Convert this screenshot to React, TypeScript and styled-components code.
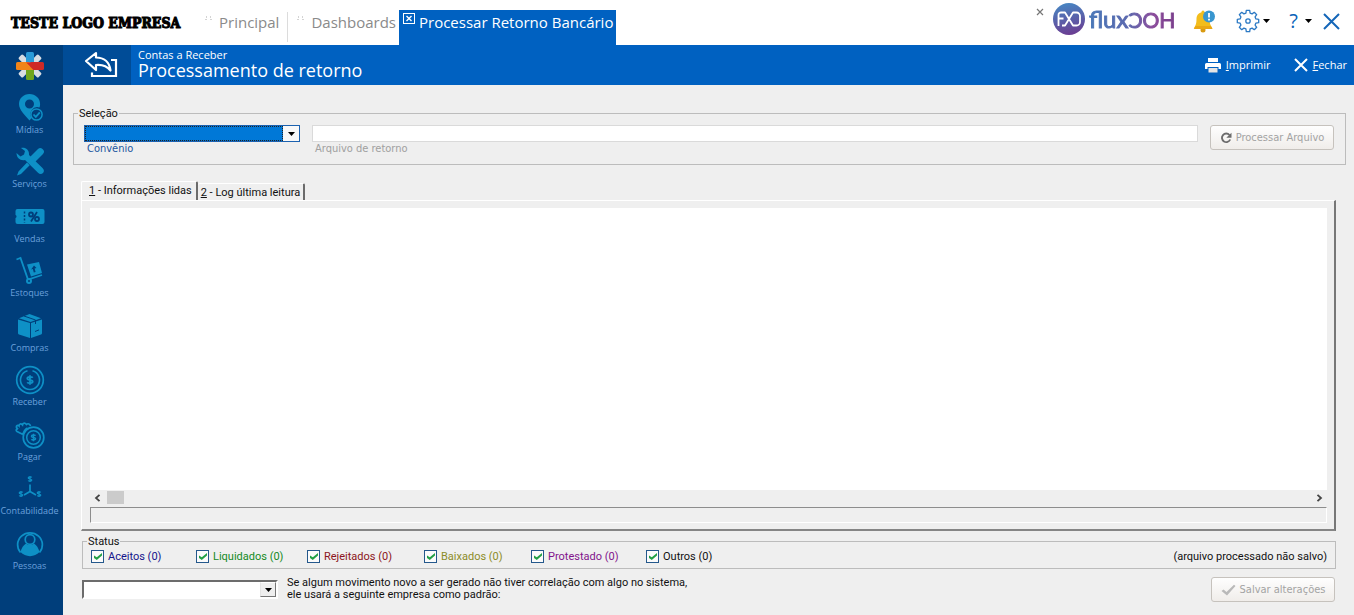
import React from "react";
import styled, { createGlobalStyle, css } from "styled-components";

const GlobalStyle = createGlobalStyle`
  *, *::before, *::after { box-sizing: border-box; }
  body { margin: 0; background: #efefef; }
  button, input, select { font: inherit; margin: 0; }
`;

const uiFont = css`font-family: Roboto, sans-serif;`;
const labelFont = css`font-family: "DejaVu Sans Condensed", "DejaVu Sans", sans-serif;`;
const headFont = css`font-family: "Open Sans", "Noto Sans", sans-serif;`;

const Page = styled.div`
  ${uiFont}
  font-size: 11px;
  line-height: 12px;
  color: #111;
  display: flex;
  flex-direction: column;
  min-height: 100vh;
`;

/* ---------- top bar ---------- */

const TopBar = styled.header`
  ${headFont}
  display: flex;
  align-items: stretch;
  height: 45px;
  background: #fff;
`;

const CompanyLogo = styled.div`
  width: 199px;
  padding: 13px 0 0 11px;
  font-family: "DejaVu Serif Condensed", "DejaVu Serif", serif;
  font-size: 14px;
  line-height: 20px;
  font-weight: 900;
  color: #000;
  -webkit-text-stroke: 1px #000;
  white-space: nowrap;
`;

const TabStrip = styled.nav`
  display: flex;
  align-items: flex-end;
`;

const PageTab = styled.a<{ $active?: boolean }>`
  display: flex;
  align-items: flex-start;
  height: 35px;
  padding: 2px 3px 0 4px;
  gap: 4px;
  font-size: 15px;
  line-height: 20px;
  white-space: nowrap;
  text-decoration: none;
  color: ${(p) => (p.$active ? "#fff" : "#8a8a8a")};
  background: ${(p) => (p.$active ? "#0061c1" : "transparent")};
`;

const TabDivider = styled.span`
  width: 1px;
  height: 30px;
  align-self: flex-end;
  margin: 0 3px 3px 5px;
  background: #dcdcdc;
`;

const TabGrip = styled.svg`
  margin: 4px 2px 0;
`;

const TopActions = styled.div`
  display: flex;
  align-items: flex-start;
  margin-left: auto;
  padding-right: 14px;
`;

const IconButton = styled.button<{ $top: number; $left: number }>`
  display: flex;
  align-items: center;
  gap: 3px;
  border: 0;
  padding: 0;
  background: none;
  color: #0a62b8;
  margin-top: ${(p) => p.$top}px;
  margin-left: ${(p) => p.$left}px;
`;

const Brand = styled.div`
  display: flex;
  align-items: flex-start;
  margin: 3px 0 0 9px;
  gap: 4px;
`;

const BrandName = styled.span`
  font-family: Lato, sans-serif;
  font-size: 24px;
  line-height: 32px;
  height: 34px;
  white-space: nowrap;
  color: transparent;
  background: linear-gradient(90deg, #4a78b8 0%, #5a68ae 45%, #8a4a9a 75%, #7a3f8c 100%);
  background-clip: text;
  -webkit-text-stroke: 1px transparent;
`;

const BrandCaps = styled.span`
  font-size: 21px;
`;

const HelpMark = styled.span`
  font-size: 20px;
  line-height: 24px;
  margin-right: 4px;
`;

/* ---------- blue title bar and side bar ---------- */

const Body = styled.div`
  flex: 1;
  display: flex;
`;

const SideBar = styled.nav`
  ${headFont}
  width: 63px;
  flex: none;
  display: flex;
  flex-direction: column;
  padding-bottom: 40px;
  background: #003e7b;
`;

const SideLogo = styled.div`
  height: 40px;
  display: flex;
  justify-content: center;
  padding: 6px 4px 0 0;
`;

const SideItem = styled.a`
  flex: 1;
  min-height: 50px;
  display: flex;
  flex-direction: column;
  align-items: center;
  gap: 1px;
  padding: 8px 4px 0 0;
  color: #6ba0dc;
  font-size: 9px;
  line-height: 12px;
  text-decoration: none;
  svg { color: #0e90c6; flex: none; }
`;

const Main = styled.main`
  flex: 1;
  min-width: 0;
  display: flex;
  flex-direction: column;
`;

const TitleBar = styled.div`
  ${headFont}
  display: flex;
  height: 40px;
  background: #0061c1;
  color: #fff;
`;

const BackButton = styled.button`
  width: 68px;
  border: 0;
  padding: 0 0 0 8px;
  background: #004c97;
  display: flex;
  align-items: center;
  justify-content: center;
`;

const Titles = styled.div`
  padding: 3px 0 0 7px;
`;

const Section = styled.div`
  font-size: 11px;
  line-height: 13px;
`;

const Title = styled.h1`
  margin: 0;
  font-size: 18px;
  line-height: 18px;
  font-weight: 400;
`;

const TitleActions = styled.div`
  display: flex;
  gap: 23px;
  margin-left: auto;
  padding-right: 7px;
`;

const TitleAction = styled.button`
  ${headFont}
  display: flex;
  align-items: center;
  gap: 5px;
  border: 0;
  padding: 0;
  background: none;
  color: #fff;
  font-size: 11px;
`;

/* ---------- form ---------- */

const Content = styled.div`
  flex: 1;
  display: flex;
  flex-direction: column;
  padding: 22px 18px 13px;
`;

const Group = styled.fieldset`
  margin: 0;
  padding: 0;
  border: 1px solid #bcbcbc;
  min-width: 0;
`;

const SelectionGroup = styled(Group)`
  margin: 0 -10px 0 -8px;
  padding: 5px 11px 8px 10px;
`;

const StatusGroup = styled(Group)`
  margin: 4px 0 0 1px;
  padding: 2px 8px 5px;
`;

const Legend = styled.legend`
  margin-left: -6px;
  padding: 0 1px;
  line-height: 13px;
`;

const StatusLegend = styled(Legend)`
  margin-left: -4px;
`;

const FormRow = styled.div`
  ${labelFont}
  display: flex;
  align-items: flex-start;
`;

const Field = styled.div<{ $grow?: boolean }>`
  display: flex;
  flex-direction: column;
  flex: ${(p) => (p.$grow ? "1" : "0 0 216px")};
  margin-right: 12px;
`;

const FieldLabel = styled.label<{ $muted?: boolean }>`
  padding-left: 3px;
  line-height: 14px;
  color: ${(p) => (p.$muted ? "#a0a0a0" : "#1d57a0")};
`;

const Combo = styled.div<{ $active?: boolean }>`
  display: flex;
  height: ${(p) => (p.$active ? 17 : 19)}px;
  width: ${(p) => (p.$active ? "100%" : "196px")};
  flex: none;
  background: #fff;
  ${(p) =>
    p.$active
      ? css`border: 1px solid #1c62b0;`
      : css`
          border: 2px solid;
          border-color: #6c6c6c #fff #fff #6c6c6c;
        `}
`;

const Select = styled.select<{ $active?: boolean }>`
  appearance: none;
  flex: 1;
  min-width: 0;
  padding: 0;
  border-radius: 0;
  outline: none;
  border: ${(p) => (p.$active ? "1px dotted #222" : "0")};
  background: ${(p) => (p.$active ? "#0078d7" : "#fff")};
`;

const ComboArrow = styled.span<{ $raised?: boolean }>`
  width: 16px;
  display: flex;
  align-items: center;
  justify-content: center;
  pointer-events: none;
  background: ${(p) => (p.$raised ? "#efefef" : "#f8f8f8")};
  ${(p) =>
    p.$raised &&
    css`
      border: 1px solid;
      border-color: #fff #777 #777 #e4e4e4;
    `}
`;

const TextInput = styled.input`
  height: 17px;
  width: 100%;
  padding: 0 3px;
  border: 1px solid #dadada;
  background: #fff;
`;

const PushButton = styled.button`
  ${labelFont}
  display: flex;
  align-items: center;
  justify-content: center;
  gap: 4px;
  flex: none;
  width: 124px;
  height: 25px;
  padding: 0;
  border: 1px solid #c6c2bd;
  border-radius: 3px;
  background: linear-gradient(#fefefe, #f0edea);
  color: #a3a3a3;
  white-space: nowrap;
`;

/* ---------- tabbed panel ---------- */

const Tabs = styled.div`
  display: flex;
  align-items: flex-end;
  margin: 16px 0 0;
`;

const Tab = styled.button<{ $active?: boolean }>`
  height: ${(p) => (p.$active ? 19 : 17)}px;
  padding: ${(p) => (p.$active ? "0 4px 0 7px" : "2px 3px 0")};
  border: 0;
  border-top: 1px solid #fff;
  border-left: ${(p) => (p.$active ? "1px solid #fff" : "0")};
  border-right: 2px solid #6b6b6b;
  border-radius: 2px 2px 0 0;
  background: #efefef;
  color: #111;
  white-space: nowrap;
`;

const Panel = styled.section`
  flex: 1;
  display: flex;
  flex-direction: column;
  padding: 7px 7px 6px 8px;
  border: 1px solid #fff;
  border-right: 2px solid #777;
  border-bottom: 2px solid #858585;
`;

const Output = styled.div`
  flex: 1;
  min-height: 120px;
  background: #fff;
`;

const ScrollBar = styled.div`
  display: flex;
  align-items: center;
  height: 15px;
  padding: 0 4px;
  color: #444;
`;

const Thumb = styled.span`
  width: 17px;
  height: 13px;
  margin-left: 6px;
  margin-right: auto;
  background: #cbcbcb;
`;

const ProgressLine = styled.div`
  height: 16px;
  margin-top: 2px;
  border: 1px solid;
  border-color: #8d8d8d #fff #fff #8d8d8d;
`;

/* ---------- status and footer ---------- */

const StatusRow = styled.div`
  display: grid;
  grid-template-columns: 105px 111px 117px 107px 115px auto 1fr;
  align-items: center;
`;

const CheckLabel = styled.label<{ $color: string }>`
  display: flex;
  align-items: center;
  gap: 4px;
  white-space: nowrap;
  color: ${(p) => p.$color};
`;

const Check = styled.input`
  appearance: none;
  width: 13px;
  height: 13px;
  border: 1px solid #24588c;
  background: #fbfbfb;
  &:checked::before {
    content: "";
    display: block;
    width: 8px;
    height: 7px;
    margin: 2px;
    background: #21a045;
    clip-path: polygon(0 35%, 35% 62%, 100% 0, 100% 35%, 35% 100%, 0 70%);
  }
`;

const StatusNote = styled.span`
  text-align: right;
  white-space: nowrap;
`;

const Footer = styled.footer`
  display: flex;
  align-items: flex-start;
  margin: 8px 1px 0 1px;
`;

const FooterCombo = styled.div`
  padding-top: 3px;
`;

const FooterText = styled.label`
  margin-left: 9px;
  margin-right: auto;
`;

/* ---------- icons ---------- */

const Caret = ({ w = 7 }: { w?: number }) => (
  <svg width={w} height="4" viewBox="0 0 7 4" aria-hidden="true">
    <path d="M0 0h7L3.500 4z" fill="#000" />
  </svg>
);

const Grip = () => (
  <TabGrip width="8" height="8" viewBox="0 0 8 8" aria-hidden="true">
    <g fill="#d4d4d4">
      <rect x="1" y="0" width="1" height="2" />
      <rect x="5" y="0" width="1" height="2" />
      <rect x="0" y="3" width="2" height="1" />
      <rect x="5" y="3" width="2" height="1" />
    </g>
  </TabGrip>
);

const SideSvg = ({ children }: { children: React.ReactNode }) => (
  <svg width="30" height="30" viewBox="0 0 30 30" fill="currentColor" aria-hidden="true">
    {children}
  </svg>
);

const Dollar = ({ x, y, s }: { x: number; y: number; s: number }) => (
  <g transform={`translate(${x} ${y}) scale(${s})`}>
    <path
      d="M3 -2.600C2 -4 -3 -4 -3 -1.700C-3 .500 3 -.500 3 1.800C3 4 -2 4 -3 2.500M0 -5.200V5.200"
      fill="none"
      stroke="currentColor"
      strokeWidth="2"
    />
  </g>
);

const sideItems: { label: string; icon: React.ReactNode }[] = [
  {
    label: "Mídias",
    icon: (
      <>
        <path
          fillRule="evenodd"
          d="M14.500 1C8.500 1 4 5.400 4 11c0 6 6 11 10.500 16.500l2-2.500a7 7 0 0 1 8-10.500c.4-1 .6-2 .6-3.500C25.100 5.400 20.500 1 14.500 1zM14.500 6.500a4.500 4.500 0 1 1 0 9 4.500 4.500 0 0 1 0-9z"
        />
        <circle cx="21.500" cy="21.500" r="5.600" fill="none" stroke="currentColor" strokeWidth="1.500" />
        <path d="M18.500 21.500l2.300 2.400 4-4.500" fill="none" stroke="currentColor" strokeWidth="1.800" />
      </>
    ),
  },
  {
    label: "Serviços",
    icon: (
      <>
        <path d="M1.500 6l4 3.500 3.500-2L10 4 6 1C10.500-.2 14.500 3 14 8l13.500 13c1.800 1.700 1.800 3.500.5 5-1.500 1.500-3.500 1.300-5-.3L10 13C5.500 14 1.500 11 1.500 6z" />
        <path
          d="M27.500 2c2 1.700 2 3.500.5 5L20 15l-5-5 8-8c1.500-1.500 3-1.500 4.500 0zM12 15.500l2.700 2.700L6 27 2 28.500 3.500 24.500z"
        />
      </>
    ),
  },
  {
    label: "Vendas",
    icon: (
      <>
        <path d="M2.500 7h25a2 2 0 0 1 2 2v11a2 2 0 0 1-2 2h-25a2 2 0 0 1-2-2v-4a1.600 1.600 0 0 0 0-3V9a2 2 0 0 1 2-2z" />
        <path d="M9.500 9.500v11" stroke="#003e7b" strokeWidth="1.500" strokeDasharray="2 1.500" />
        <g fill="none" stroke="#003e7b" strokeWidth="1.800">
          <circle cx="16" cy="12.500" r="2" />
          <circle cx="22" cy="17" r="2" />
          <path d="M22 10l-6 9.500" />
        </g>
      </>
    ),
  },
  {
    label: "Estoques",
    icon: (
      <>
        <path d="M1.500 3.500l4-1.500L13 23.500l14-4.500" fill="none" stroke="currentColor" strokeWidth="1.800" />
        <path fillRule="evenodd" d="M12 8.500l12-2.500 3 11-11 3.500zM19 9.500l-2.900 4 1.700-.5 1 3.500 1.800-.5-1-3.500 1.900-.5z" />
        <circle cx="14" cy="25" r="3" />
        <circle cx="14" cy="25" r="1" fill="#003e7b" />
      </>
    ),
  },
  {
    label: "Compras",
    icon: (
      <>
        <path d="M3 8.500l12 3.500v15L4 23.500a1.500 1.500 0 0 1-1-1.500z" />
        <path d="M16 12L27 8.500V22a1.500 1.500 0 0 1-1 1.500l-10 3.500z" />
        <path d="M4 7.300l10.500-4.300L26 7.300l-10.500 3.700z" />
        <path d="M9 5l11.500 4v4" fill="none" stroke="#003e7b" strokeWidth="1" />
        <path d="M20 20.500l4-1.600" stroke="#003e7b" strokeWidth="1" />
      </>
    ),
  },
  {
    label: "Receber",
    icon: (
      <>
        <circle cx="15" cy="15" r="13.300" fill="none" stroke="currentColor" strokeWidth="1.700" />
        <path d="M12.500 5.800A9.500 9.500 0 1 0 17.500 5.800" fill="none" stroke="currentColor" strokeWidth="1.600" />
        <Dollar x={15} y={15} s={0.9} />
      </>
    ),
  },
  {
    label: "Pagar",
    icon: (
      <>
        <path
          d="M8 14.500L2 11.500C.5 10.500 1.500 8.500 3 9L1.500 7.500C1 5.500 3 5 4 6 4 3.500 6 3.500 7.500 5 8 2.500 10 2.500 11.500 4.500 13 3 15 4 15.500 6M8 14.500c.5-3 2-5 4.500-6.500"
          fill="none"
          stroke="currentColor"
          strokeWidth="1.700"
        />
        <circle cx="18.500" cy="17.500" r="10.300" fill="none" stroke="currentColor" strokeWidth="1.700" />
        <circle cx="18.500" cy="17.500" r="6.800" fill="none" stroke="currentColor" strokeWidth="1.500" />
        <Dollar x={18.5} y={17.5} s={0.7} />
      </>
    ),
  },
  {
    label: "Contabilidade",
    icon: (
      <>
        <path d="M15 10.500v7l-6 3.500M15 17.500l6 3.500" fill="none" stroke="currentColor" strokeWidth="1.700" />
        <Dollar x={15} y={5} s={0.6} />
        <Dollar x={6} y={20} s={0.6} />
        <Dollar x={24} y={20} s={0.6} />
      </>
    ),
  },
  {
    label: "Pessoas",
    icon: (
      <>
        <path d="M5.500 23.500A12.400 12 0 1 1 24.500 23.500" fill="none" stroke="currentColor" strokeWidth="1.700" />
        <path d="M5.500 23c1-4 3-7 5.500-8.500a6 6 0 0 0 8 0c2.500 1.500 4.500 4.500 5.500 8.500a13 13 0 0 1-19 0z" />
        <circle cx="15" cy="10.500" r="4.800" fill="none" stroke="currentColor" strokeWidth="1.700" />
      </>
    ),
  },
];

const AppMark = () => {
  const arms = ["#2a9bd8", "#d8dde2", "#cf2a27", "#d8dde2", "#6fa51c", "#d8dde2", "#f08418", "#d8dde2"];
  const order = [1, 3, 5, 7, 0, 4, 6, 2];
  return (
    <svg width="30" height="30" viewBox="-15 -15 30 30" aria-hidden="true">
      {order.map((i) => (
        <rect
          key={i}
          x={i % 2 ? -3 : -4}
          y="-14"
          width={i % 2 ? 6 : 8}
          height={i % 2 ? 11 : 14}
          rx="1.500"
          fill={arms[i]}
          transform={`rotate(${i * 45})`}
        />
      ))}
      <path d="M-4 -3.500L3.500 4V-3.500z" fill="#cf2a27" />
      <path d="M-4 -3.500L3.500 4H-4z" fill="#f08418" />
    </svg>
  );
};

const BackIcon = () => (
  <svg width="34" height="28" viewBox="0 0 34 28" fill="none" stroke="#fff" strokeWidth="2.200" aria-hidden="true">
    <path d="M12 2L2 10l10 9v-5c6-.5 11 1 14.500 5.500C25.500 11 20 6.500 12 6.500z" strokeLinejoin="round" />
    <path d="M27 9h5v16H8v-3.500" />
  </svg>
);

const BrandMark = () => (
  <svg width="32" height="32" viewBox="0 0 32 32" aria-hidden="true">
    <defs>
      <linearGradient id="brand" x1="0.200" y1="0" x2="0.400" y2="1">
        <stop offset="0" stopColor="#4688c4" />
        <stop offset="1" stopColor="#6a3f93" />
      </linearGradient>
    </defs>
    <circle cx="16" cy="16" r="16" fill="url(#brand)" />
    <g fill="none" stroke="#fff" strokeWidth="1.800" strokeLinejoin="round">
      <path d="M5.500 23V12a2.500 2.500 0 0 1 2.500-2.500h4L20 22.500h3.500a3.500 3.500 0 0 0 3.500-3.500v-6a3.500 3.500 0 0 0-3.500-3.500H20L12 22.500H9M5.500 15.500h5" />
    </g>
  </svg>
);

const BellIcon = () => (
  <svg width="24" height="24" viewBox="0 0 24 24" aria-hidden="true">
    <circle cx="10" cy="21" r="2.500" fill="#d99a10" />
    <path d="M10 1.500a1.500 1.500 0 0 1 1.500 1.700C15 4 16.500 7 16.500 10c0 4 .7 6 3 9.500H.8C3 16 3.500 14 3.500 10c0-3 1.500-6 5-6.800A1.500 1.500 0 0 1 10 1.500z" fill="#f3bd1c" />
    <path d="M2.500 17h15.300l1.700 3H.8z" fill="#eaa714" />
    <circle cx="16" cy="7.500" r="6" fill="#3996cf" />
    <path d="M16 4v4.500M16 9.800v1.700" stroke="#fff" strokeWidth="1.800" />
  </svg>
);

const gearPath = (() => {
  const pts: string[] = [];
  for (let i = 0; i < 8; i++) {
    [[-15, 8.2], [-9, 10.8], [9, 10.8], [15, 8.2]].forEach(([da, r]) => {
      const a = ((i * 45 + da) * Math.PI) / 180;
      pts.push(`${(12 + r * Math.cos(a)).toFixed(1)} ${(12 + r * Math.sin(a)).toFixed(1)}`);
    });
  }
  return `M${pts.join("L")}z`;
})();

const GearIcon = () => (
  <svg width="24" height="24" viewBox="0 0 24 24" fill="none" stroke="#2b79c4" strokeWidth="1.300" strokeLinejoin="round" aria-hidden="true">
    <path d={gearPath} />
    <circle cx="12" cy="12" r="2.200" />
  </svg>
);

const Cross = ({ size, color, weight }: { size: number; color: string; weight: number }) => (
  <svg width={size} height={size} viewBox={`0 0 ${size} ${size}`} aria-hidden="true">
    <path d={`M1 1L${size - 1} ${size - 1}M${size - 1} 1L1 ${size - 1}`} stroke={color} strokeWidth={weight} />
  </svg>
);

const PrinterIcon = () => (
  <svg width="16" height="15" viewBox="0 0 16 15" aria-hidden="true">
    <path d="M3 0h10v4H3z" fill="#fff" />
    <path d="M1.500 5h13A1.500 1.500 0 0 1 16 6.500V11h-2.500V9h-11v2H0V6.500A1.500 1.500 0 0 1 1.500 5z" fill="#fff" />
    <path d="M3.500 10h9v4.500h-9z" fill="#e4e4e4" />
  </svg>
);

const RefreshIcon = () => (
  <svg width="12" height="12" viewBox="0 0 12 12" aria-hidden="true">
    <path d="M9.500 3A4.300 4.300 0 1 0 10.200 7.500" fill="none" stroke="#6c6c6c" strokeWidth="1.900" />
    <path d="M11.500 .8v5H6.300z" fill="#6c6c6c" />
  </svg>
);

const SaveCheck = () => (
  <svg width="15" height="12" viewBox="0 0 15 12" aria-hidden="true">
    <path d="M.5 7l2-1.500L5.500 8 13 .8 14.500 2 6 11.500z" fill="#b9b9b9" />
  </svg>
);

const Chevron = ({ right }: { right?: boolean }) => (
  <svg width="7" height="8" viewBox="0 0 7 8" fill="none" stroke="#444" strokeWidth="1.800" aria-hidden="true">
    <path d={right ? "M1.500 .8L5 4 1.500 7.200" : "M5.500 .8L2 4l3.500 3.200"} />
  </svg>
);

const statuses = [
  { label: "Aceitos (0)", color: "#14148c" },
  { label: "Liquidados (0)", color: "#148a1e" },
  { label: "Rejeitados (0)", color: "#8c1420" },
  { label: "Baixados (0)", color: "#8c8c28" },
  { label: "Protestado (0)", color: "#82148c" },
  { label: "Outros (0)", color: "#111" },
];

export default function App() {
  return (
    <Page>
      <GlobalStyle />
      <TopBar>
        <CompanyLogo>TESTE LOGO EMPRESA</CompanyLogo>
        <TabStrip>
          <PageTab href="#principal"><Grip />Principal</PageTab>
          <TabDivider />
          <PageTab href="#dashboards"><Grip />Dashboards</PageTab>
          <PageTab href="#retorno" $active>
            <svg width="12" height="14" viewBox="0 -1 12 14" fill="none" stroke="#fff" aria-hidden="true">
              <rect x="0.500" y="0.500" width="11" height="10" />
              <path d="M3.500 3l5 5M8.500 3l-5 5" strokeWidth="1.400" />
            </svg>
            Processar Retorno Bancário
          </PageTab>
        </TabStrip>
        <TopActions>
          <IconButton $top={8} $left={0} aria-label="Fechar aba"><Cross size={8} color="#777" weight={1.2} /></IconButton>
          <Brand>
            <BrandMark />
            <BrandName>flux<BrandCaps>ƆOH</BrandCaps></BrandName>
          </Brand>
          <IconButton $top={9} $left={18} aria-label="Notificações"><BellIcon /></IconButton>
          <IconButton $top={9} $left={19} aria-label="Configurações"><GearIcon /><Caret /></IconButton>
          <IconButton $top={9} $left={19} aria-label="Ajuda"><HelpMark>?</HelpMark><Caret /></IconButton>
          <IconButton $top={13} $left={11} aria-label="Sair"><Cross size={17} color="#1466b8" weight={2} /></IconButton>
        </TopActions>
      </TopBar>
      <Body>
        <SideBar>
          <SideLogo><AppMark /></SideLogo>
          {sideItems.map((item) => (
            <SideItem key={item.label} href="#menu">
              <SideSvg>{item.icon}</SideSvg>
              {item.label}
            </SideItem>
          ))}
        </SideBar>
        <Main>
          <TitleBar>
            <BackButton aria-label="Voltar"><BackIcon /></BackButton>
            <Titles>
              <Section>Contas a Receber</Section>
              <Title>Processamento de retorno</Title>
            </Titles>
            <TitleActions>
              <TitleAction><PrinterIcon /><span><u>I</u>mprimir</span></TitleAction>
              <TitleAction><Cross size={14} color="#fff" weight={2} /><span><u>F</u>echar</span></TitleAction>
            </TitleActions>
          </TitleBar>
          <Content>
            <SelectionGroup>
              <Legend>Seleção</Legend>
              <FormRow>
                <Field>
                  <Combo $active>
                    <Select id="convenio" $active><option></option></Select>
                    <ComboArrow><Caret /></ComboArrow>
                  </Combo>
                  <FieldLabel htmlFor="convenio">Convênio</FieldLabel>
                </Field>
                <Field $grow>
                  <TextInput id="arquivo" type="text" />
                  <FieldLabel htmlFor="arquivo" $muted>Arquivo de retorno</FieldLabel>
                </Field>
                <PushButton disabled><RefreshIcon />Processar Arquivo</PushButton>
              </FormRow>
            </SelectionGroup>
            <Tabs role="tablist">
              <Tab role="tab" aria-selected="true" $active><u>1</u> - Informações lidas</Tab>
              <Tab role="tab" aria-selected="false"><u>2</u> - Log última leitura</Tab>
            </Tabs>
            <Panel role="tabpanel">
              <Output />
              <ScrollBar><Chevron /><Thumb /><Chevron right /></ScrollBar>
              <ProgressLine />
            </Panel>
            <StatusGroup>
              <StatusLegend>Status</StatusLegend>
              <StatusRow>
                {statuses.map((s) => (
                  <CheckLabel key={s.label} $color={s.color}>
                    <Check type="checkbox" defaultChecked />
                    {s.label}
                  </CheckLabel>
                ))}
                <StatusNote>(arquivo processado não salvo)</StatusNote>
              </StatusRow>
            </StatusGroup>
            <Footer>
              <FooterCombo>
                <Combo>
                  <Select id="empresa"><option></option></Select>
                  <ComboArrow $raised><Caret /></ComboArrow>
                </Combo>
              </FooterCombo>
              <FooterText htmlFor="empresa">
                Se algum movimento novo a ser gerado não tiver correlação com algo no sistema,
                <br />
                ele usará a seguinte empresa como padrão:
              </FooterText>
              <PushButton disabled><SaveCheck />Salvar alterações</PushButton>
            </Footer>
          </Content>
        </Main>
      </Body>
    </Page>
  );
}
